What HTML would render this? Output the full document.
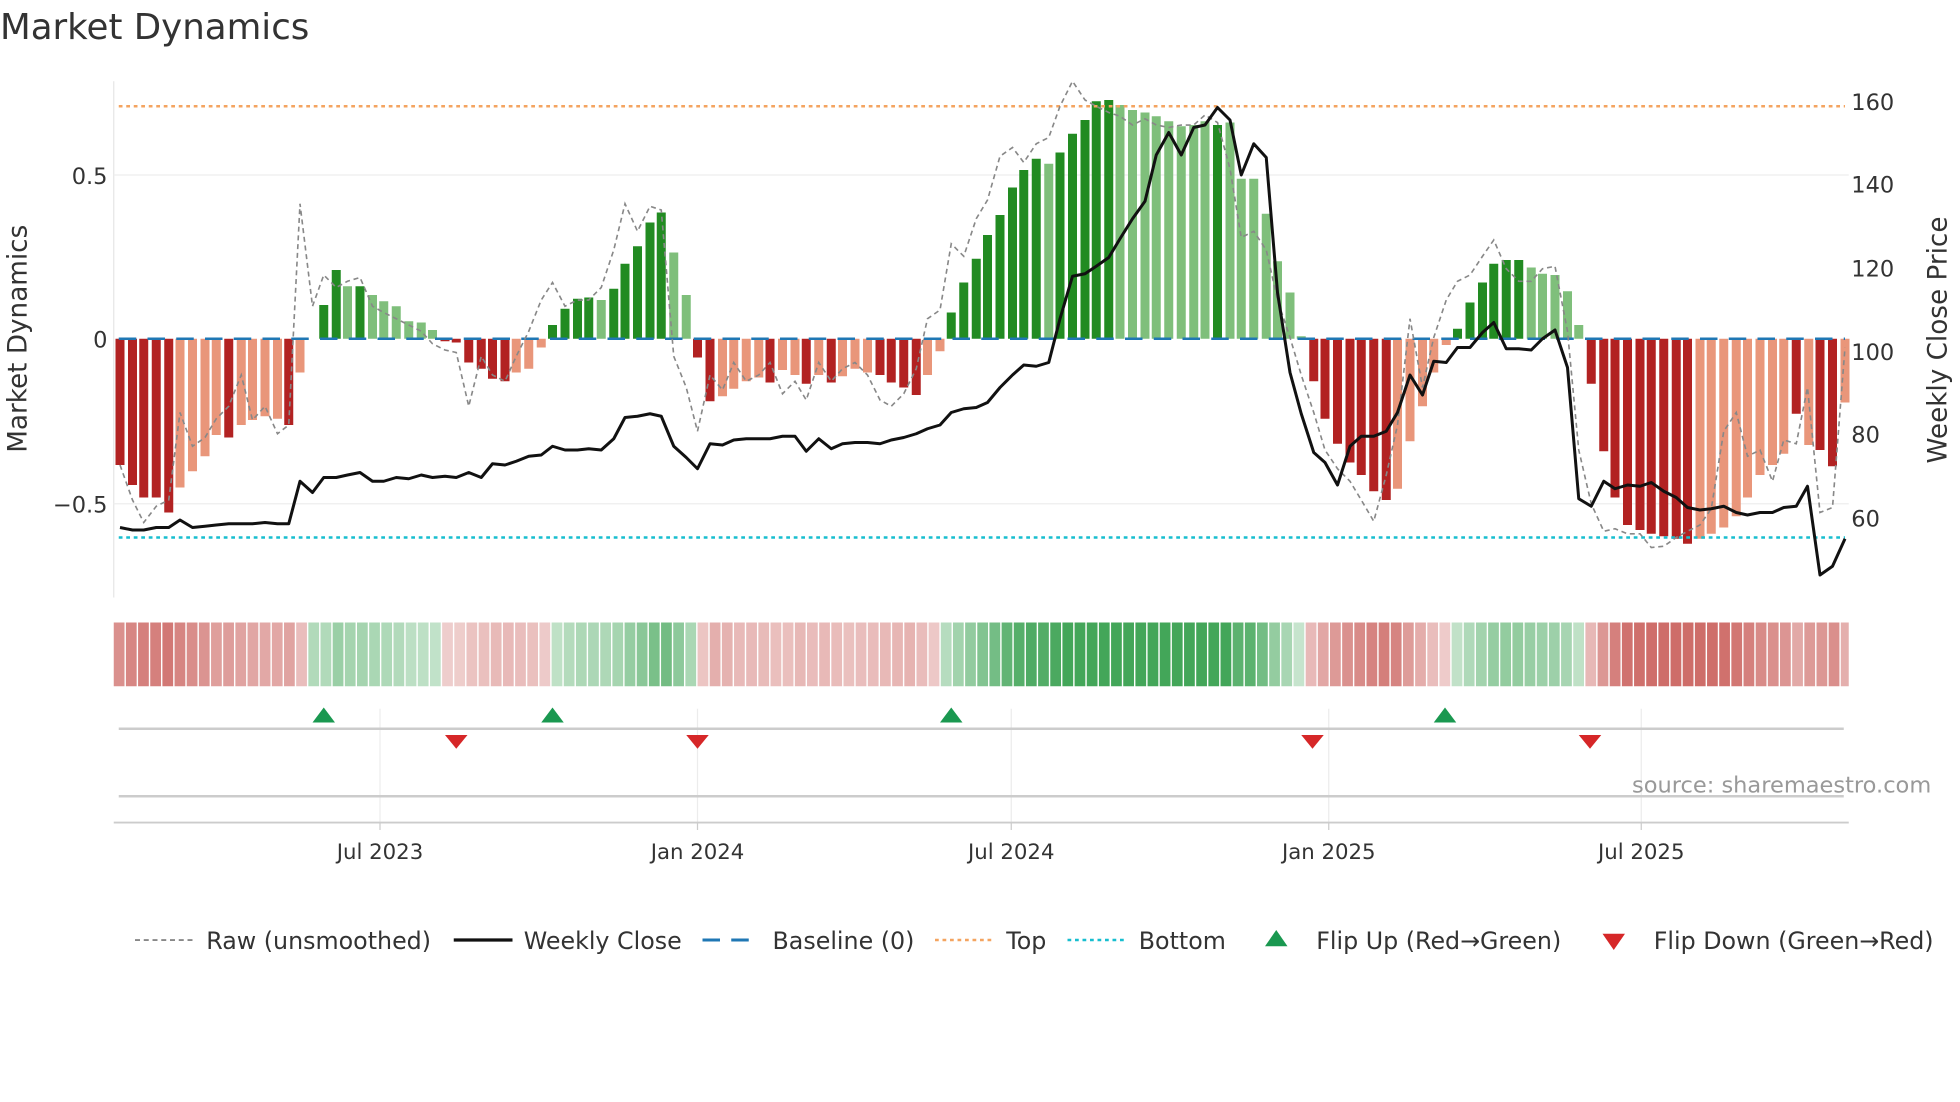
<!DOCTYPE html>
<html><head><meta charset="utf-8"><style>
html,body{margin:0;padding:0;background:#fff;}
svg{display:block;font-family:"DejaVu Sans","Liberation Sans",sans-serif;}
</style></head><body>
<svg id="s" width="1960" height="1102" viewBox="0 0 1568 881.6" preserveAspectRatio="none" xmlns="http://www.w3.org/2000/svg">
<rect width="1568" height="882" fill="#fff"/>
<text x="0" y="31" font-size="28.5" fill="#333">Market Dynamics</text>
<line x1="91" y1="65" x2="91" y2="478" stroke="#e6e6e6"/>
<line x1="91" y1="140" x2="1479" y2="140" stroke="#eeeeee"/>
<line x1="91" y1="403" x2="1479" y2="403" stroke="#eeeeee"/>
<g id="bars"></g>
<line x1="95" y1="271" x2="1476" y2="271" stroke="#1f77b4" stroke-width="2" stroke-dasharray="14,9"/>
<line x1="95" y1="85" x2="1476" y2="85" stroke="#f4a460" stroke-width="2" stroke-dasharray="3,3"/>
<line x1="95" y1="430" x2="1476" y2="430" stroke="#17becf" stroke-width="2" stroke-dasharray="3,3"/>
<polyline id="raw" fill="none" stroke="#888" stroke-width="1.3" stroke-dasharray="4,3"/>
<polyline id="close" fill="none" stroke="#111" stroke-width="2.4" stroke-linejoin="round"/>
<g font-size="18" fill="#333">
<text x="86" y="147" text-anchor="end">0.5</text>
<text x="86" y="278" text-anchor="end">0</text>
<text x="86" y="410" text-anchor="end">−0.5</text>
<text x="1481" y="88">160</text>
<text x="1481" y="154">140</text>
<text x="1481" y="221">120</text>
<text x="1481" y="288">100</text>
<text x="1481" y="354">80</text>
<text x="1481" y="421">60</text>
<text transform="translate(21,271) rotate(-90)" text-anchor="middle" font-size="21">Market Dynamics</text>
<text transform="translate(1557,272) rotate(-90)" text-anchor="middle" font-size="21">Weekly Close Price</text>
</g>
<g id="strip"></g>
<g stroke="#ececec">
<line x1="304" y1="567" x2="304" y2="658"/><line x1="558" y1="567" x2="558" y2="658"/><line x1="809" y1="567" x2="809" y2="658"/><line x1="1063" y1="567" x2="1063" y2="658"/><line x1="1313" y1="567" x2="1313" y2="658"/>
</g>
<line x1="95" y1="583" x2="1475" y2="583" stroke="#ccc" stroke-width="2"/>
<line x1="95" y1="637" x2="1475" y2="637" stroke="#ccc" stroke-width="2"/>
<line x1="91" y1="658" x2="1479" y2="658" stroke="#ccc" stroke-width="1.5"/>
<g id="marks"></g>
<text x="1545" y="634" text-anchor="end" font-size="18" fill="#999">source: sharemaestro.com</text>
<g font-size="17" fill="#333" text-anchor="middle">
<line x1="304" y1="658" x2="304" y2="664" stroke="#ccc"/><text x="304" y="687">Jul 2023</text>
<line x1="558" y1="658" x2="558" y2="664" stroke="#ccc"/><text x="558" y="687">Jan 2024</text>
<line x1="809" y1="658" x2="809" y2="664" stroke="#ccc"/><text x="809" y="687">Jul 2024</text>
<line x1="1063" y1="658" x2="1063" y2="664" stroke="#ccc"/><text x="1063" y="687">Jan 2025</text>
<line x1="1313" y1="658" x2="1313" y2="664" stroke="#ccc"/><text x="1313" y="687">Jul 2025</text>
</g>
<g font-size="19" fill="#333">
<line x1="108" y1="752" x2="154" y2="752" stroke="#888" stroke-width="1.5" stroke-dasharray="4,3"/><text x="165" y="759">Raw (unsmoothed)</text>
<line x1="363" y1="752" x2="410" y2="752" stroke="#111" stroke-width="2.6"/><text x="419" y="759">Weekly Close</text>
<line x1="562" y1="752" x2="608" y2="752" stroke="#1f77b4" stroke-width="2.4" stroke-dasharray="14,9"/><text x="618" y="759">Baseline (0)</text>
<line x1="748" y1="752" x2="794" y2="752" stroke="#f4a460" stroke-width="2" stroke-dasharray="3,3"/><text x="805" y="759">Top</text>
<line x1="854" y1="752" x2="900" y2="752" stroke="#17becf" stroke-width="2" stroke-dasharray="3,3"/><text x="911" y="759">Bottom</text>
<polygon points="1012,757 1030,757 1021,744" fill="#1a9850"/><text x="1053" y="759">Flip Up (Red→Green)</text>
<polygon points="1282,747 1300,747 1291,760" fill="#d62728"/><text x="1323" y="759">Flip Down (Green→Red)</text>
</g>
</svg>
<script>
var NS="http://www.w3.org/2000/svg";
function el(p,t,a){var e=document.createElementNS(NS,t);for(var k in a)e.setAttribute(k,a[k]);p.appendChild(e);return e;}
var B=[[96,372,1],[106,388,1],[115,398,1],[125,398,1],[135,410,1],[144,390,0],[154,377,0],[164,365,0],[173,348,0],[183,350,1],[193,340,0],[202,336,0],[212,333,0],[222,335,0],[231,340,1],[240,298,0],
[259,244,1],[269,216,1],[278,229,0],[288,229,1],[298,236,0],[307,241,0],[317,245,0],[327,257,0],[337,258,0],[346,264,0],[356,273,1],[365,274,1],
[375,290,1],[385,295,1],[394,303,1],[404,305,1],[413,298,0],[423,295,0],[433,278,0],
[442,260,1],[452,247,1],[462,239,1],[471,238,1],[481,240,0],[491,231,1],[500,211,1],[510,197,1],[520,178,1],[529,170,1],[539,202,0],[549,236,0],
[558,286,1],[568,321,1],[578,317,0],[587,311,0],[597,305,0],[607,302,0],[616,306,1],[626,296,0],[636,300,0],[645,307,1],[655,300,0],[665,306,1],[674,301,0],[684,295,0],[694,298,0],[704,300,1],[713,306,1],[723,310,1],[733,316,1],[742,300,0],[752,281,0],
[761,250,1],[771,226,1],[781,207,1],[790,188,1],[800,172,1],[810,150,1],[819,136,1],[829,127,1],[839,131,0],[848,122,1],[858,107,1],[868,96,1],[877,81,1],[887,80,1],[896,84,0],[906,88,0],[916,90,0],[925,93,0],[935,97,0],[945,101,0],[955,100,0],[964,97,0],[974,100,1],[984,98,0],[993,143,0],[1003,143,0],[1013,171,0],[1022,209,0],[1032,234,0],[1041,269,0],
[1051,305,1],[1060,335,1],[1070,355,1],[1080,370,1],[1089,380,1],[1099,393,1],[1109,400,1],[1118,391,0],[1128,353,0],[1138,325,0],[1147,298,0],[1157,276,0],
[1166,263,1],[1176,242,1],[1186,226,1],[1195,211,1],[1205,208,1],[1215,208,1],[1225,214,0],[1234,219,0],[1244,220,0],[1254,233,0],[1263,260,0],
[1273,307,1],[1283,361,1],[1292,398,1],[1302,420,1],[1312,424,1],[1321,427,1],[1331,429,1],[1341,431,1],[1350,435,1],[1360,431,0],[1369,427,0],[1379,422,0],[1389,413,0],[1398,398,0],[1408,380,0],[1418,372,0],[1427,363,0],[1437,331,1],[1447,356,0],[1456,360,1],[1466,373,1],[1476,322,0]];
var g=document.getElementById('bars'),st=document.getElementById('strip');
B.forEach(function(b){var x=b[0],t=b[1],d=b[2],z=271;var pos=t<z;
 var c=pos?(d?'#228b22':'#7fbf7b'):(d?'#b22222':'#e9967a');
 el(g,'rect',{x:x-3.6,y:Math.min(t,z),width:7.2,height:Math.abs(z-t),fill:c});});
var xs=[];for(var x=91;x<1475;x+=9.73)xs.push(x);
function valAt(x){var best=B[0];B.forEach(function(b){if(Math.abs(b[0]-x)<Math.abs(best[0]-x))best=b;});return (271-best[1])/263;}
xs.forEach(function(x,i){var v=valAt(x+4.8);var m=Math.min(1,Math.abs(v)/0.6);var a=0.25+0.6*m;
 var c=v>=0?'rgba(34,150,60,'+a+')':'rgba(190,60,55,'+(0.25+0.5*m)+')';
 var w=Math.min(8.6,1479-x);
 el(st,'rect',{x:x,y:498,width:w,height:51,fill:c});});
var R=[[96,372],[106,400],[115,418],[125,405],[135,400],[144,330],[154,357],[164,350],[173,335],[183,325],[193,300],[202,336],[212,325],[222,347],[231,340],[240,163],[250,245],[259,220],[269,230],[278,225],[288,222],[298,245],[307,250],[317,255],[327,260],[337,265],[346,275],[356,280],[365,282],[375,325],[385,285],[394,300],[404,305],[413,285],[423,265],[433,240],[442,226],[452,245],[462,240],[471,240],[481,230],[491,200],[500,163],[510,185],[520,165],[529,168],[539,285],[549,310],[558,345],[568,300],[578,312],[587,290],[597,305],[607,300],[616,290],[626,315],[636,305],[645,320],[655,290],[665,305],[674,295],[684,290],[694,300],[704,320],[713,325],[723,315],[733,295],[742,255],[752,248],[761,195],[771,205],[781,175],[790,160],[800,125],[810,118],[819,130],[829,115],[839,110],[848,85],[858,65],[868,80],[877,85],[887,90],[896,93],[906,100],[916,95],[925,100],[935,102],[945,100],[955,100],[964,92],[974,98],[984,135],[993,190],[1003,185],[1013,200],[1022,240],[1032,270],[1041,300],[1051,330],[1060,360],[1070,375],[1080,385],[1089,400],[1099,417],[1109,380],[1118,340],[1128,255],[1138,310],[1147,270],[1157,240],[1166,225],[1176,220],[1186,205],[1195,192],[1205,215],[1215,225],[1225,225],[1234,215],[1244,213],[1254,265],[1263,360],[1273,403],[1283,425],[1292,423],[1302,427],[1312,427],[1321,438],[1331,437],[1341,430],[1350,425],[1360,420],[1369,407],[1379,345],[1389,330],[1398,365],[1408,360],[1418,385],[1427,352],[1437,355],[1446,310],[1456,410],[1466,406],[1476,278]];
var C=[[96,422],[106,424],[115,424],[125,422],[135,422],[144,416],[154,422],[164,421],[173,420],[183,419],[193,419],[202,419],[212,418],[222,419],[231,419],[240,385],[250,394],[259,382],[269,382],[278,380],[288,378],[298,385],[307,385],[317,382],[327,383],[337,380],[346,382],[356,381],[365,382],[375,378],[385,382],[394,371],[404,372],[413,369],[423,365],[433,364],[442,357],[452,360],[462,360],[471,359],[481,360],[491,351],[500,334],[510,333],[520,331],[529,333],[539,357],[549,366],[558,375],[568,355],[578,356],[587,352],[597,351],[607,351],[616,351],[626,349],[636,349],[645,361],[655,351],[665,359],[674,355],[684,354],[694,354],[704,355],[713,352],[723,350],[733,347],[742,343],[752,340],[761,330],[771,327],[781,326],[790,322],[800,310],[810,300],[819,292],[829,293],[839,290],[848,255],[858,221],[868,219],[877,213],[887,206],[896,191],[906,175],[916,161],[925,124],[935,106],[945,124],[955,102],[964,100],[974,86],[984,96],[993,140],[1003,115],[1013,126],[1022,234],[1032,298],[1041,331],[1051,362],[1060,370],[1070,388],[1080,357],[1089,349],[1099,349],[1109,345],[1118,330],[1128,300],[1138,316],[1147,289],[1157,290],[1166,278],[1176,278],[1186,266],[1195,258],[1205,279],[1215,279],[1225,280],[1234,271],[1244,264],[1254,294],[1263,399],[1273,405],[1283,385],[1292,391],[1302,388],[1312,389],[1321,386],[1331,393],[1341,398],[1350,406],[1360,408],[1369,407],[1379,405],[1389,410],[1398,412],[1408,410],[1418,410],[1427,406],[1437,405],[1446,389],[1456,460],[1466,453],[1476,431]];
document.getElementById('raw').setAttribute('points',R.map(function(p){return p.join(',')}).join(' '));
document.getElementById('close').setAttribute('points',C.map(function(p){return p.join(',')}).join(' '));
var mk=document.getElementById('marks');
[259,442,761,1156].forEach(function(x){el(mk,'polygon',{points:(x-9)+',578 '+(x+9)+',578 '+x+',566',fill:'#1a9850'});});
[365,558,1050,1272].forEach(function(x){el(mk,'polygon',{points:(x-9)+',588 '+(x+9)+',588 '+x+',599',fill:'#d62728'});});
</script>
</body></html>
